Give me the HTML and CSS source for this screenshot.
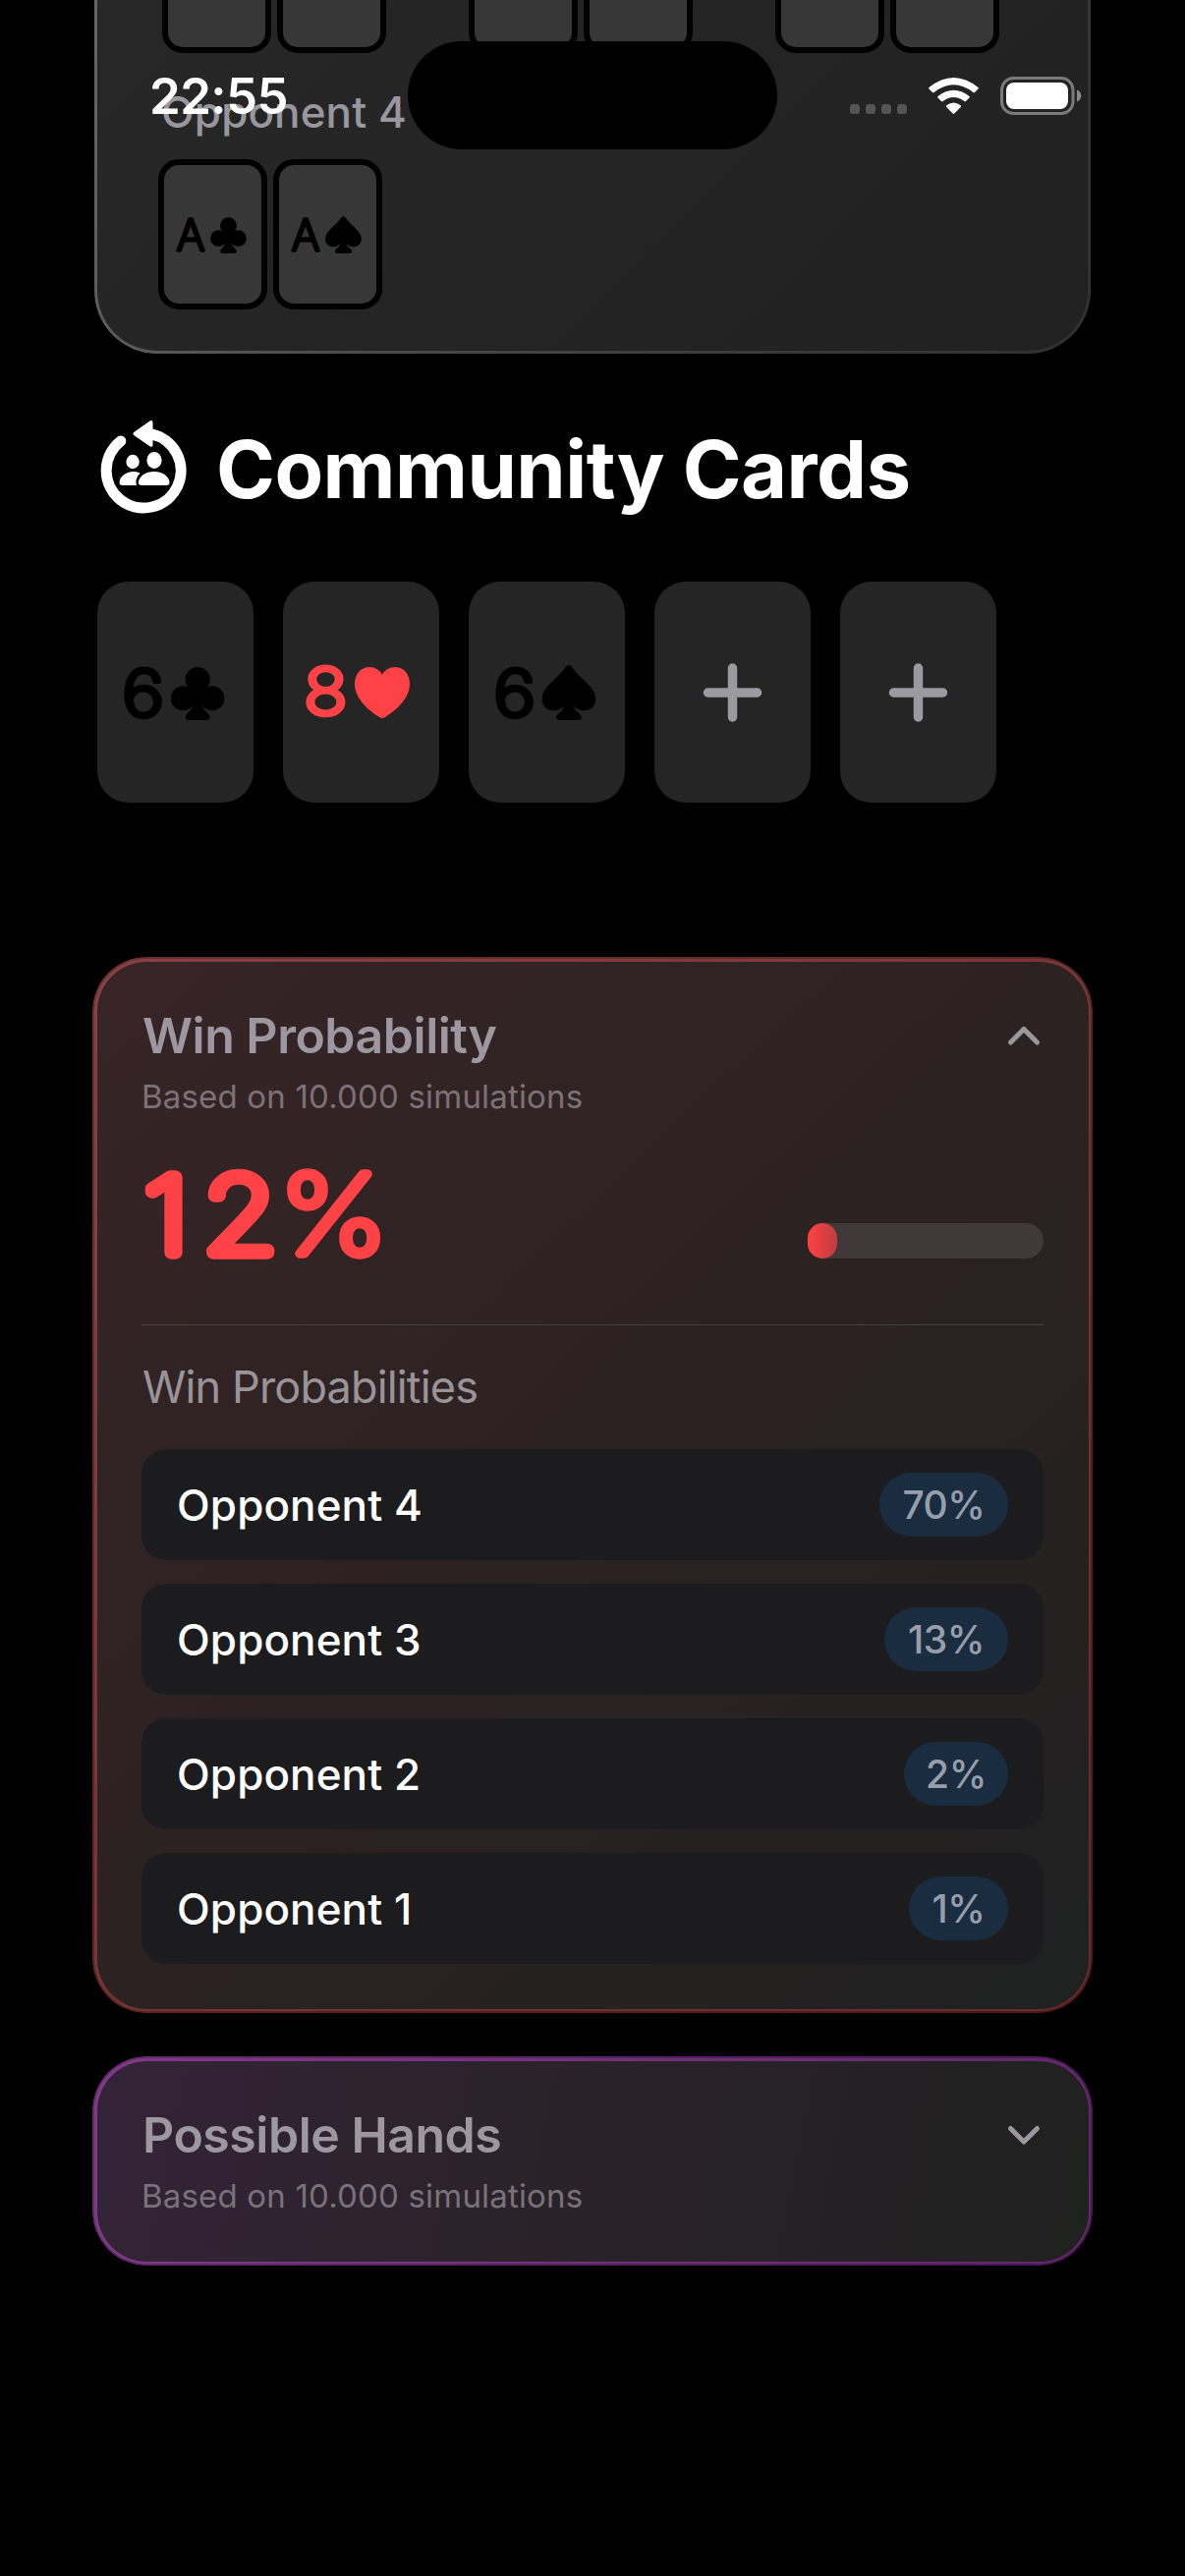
FILE: index.html
```html
<!DOCTYPE html>
<html lang="en">
<head>
<meta charset="utf-8">
<title>Poker Odds</title>
<link rel="stylesheet" href="styles.css">
</head>
<body>
<svg class="defs" aria-hidden="true">
  <symbol id="club" viewBox="0 0 55 54">
    <circle cx="27.5" cy="12.6" r="12.6"/><circle cx="12.5" cy="31.7" r="12.4"/><circle cx="42.3" cy="31.7" r="12.4"/>
    <path d="M19.500 20H35.500V36H19.500Z"/>
    <path d="M22.300 34V38C22.300 44 16.500 46.300 15.500 49.500C14.500 52 16 54 18 54H37C39 54 40.500 52 39.500 49.500C38.500 46.300 32.700 44 32.700 38V34Z"/>
  </symbol>
  <symbol id="spade" viewBox="0 0 55 56">
    <path d="M27.400 0C29.500 0 30.500 1.500 31.500 3C38 13.500 54.800 22 54.800 34.500C54.800 41.500 49.500 46.300 43 46.300C38.500 46.300 34 44 32.500 41.500C32.500 46 38 48.500 39.500 51C41 54 40 56 37 56H18C15 56 14 54 15.300 51C17 48.500 22.300 46 22.300 41.500C21 44 16.500 46.300 12 46.300C5.300 46.300 0 41.500 0 34.500C0 22 16.800 13.500 23.300 3C24.300 1.500 25.300 0 27.400 0Z"/>
  </symbol>
  <symbol id="heart" viewBox="0 0 56 52">
    <path d="M28 52c-1.500 0-2.500-.7-4-1.700C12 42.500 0 31 0 17C0 6.500 6.800 0 15 0C20.500 0 25.500 3 28 7.500C30.500 3 35.500 0 41 0C49.200 0 56 6.500 56 17C56 31 44 42.500 32 50.300C30.500 51.300 29.500 52 28 52Z"/>
  </symbol>
</svg>

<header class="status">
  <time class="clock">22:55</time>
  <div class="island"></div>
  <svg class="indicators" width="240" height="44" viewBox="864 76 240 44">
    <g fill="#545454"><rect x="865" y="106" width="10" height="10" rx="3"/><rect x="881" y="106" width="10" height="10" rx="3"/><rect x="897" y="106" width="10" height="10" rx="3"/><rect x="913" y="106" width="10" height="10" rx="3"/></g>
    <g fill="#fff">
      <path d="M945.500 89Q970.500 69 995.500 89Q996.300 89.800 995.500 90.600L992 94Q991.200 94.700 990.400 94Q970.500 78.500 950.600 94Q949.800 94.700 949 94L945.500 90.600Q944.700 89.800 945.500 89Z"/>
      <path d="M954.500 98Q970.500 85.500 986.500 98Q987.300 98.800 986.500 99.600L983 103Q982.200 103.700 981.400 103Q970.500 95 959.600 103Q958.800 103.700 958 103L954.500 99.600Q953.700 98.800 954.500 98Z"/>
      <path d="M963.300 107.200Q970.500 102 977.700 107.200Q978.500 108 977.700 108.900L971.400 115.600Q970.500 116.500 969.600 115.600L963.300 108.900Q962.500 108 963.300 107.200Z"/>
      <rect x="1024" y="84" width="63" height="27" rx="8"/>
    </g>
    <rect x="1019.500" y="79.500" width="72.500" height="36" rx="12" fill="none" stroke="#7a7a7a" stroke-width="3"/>
    <path d="M1096 91.500C1099 92.500 1100.300 95 1100.300 97.500S1099 102.500 1096 103.500Z" fill="#8a8a8a"/>
  </svg>
</header>

<main>
  <section class="opponents">
    <div class="row-top">
      <div class="hand"><div class="mini"></div><div class="mini"></div></div>
      <div class="hand"><div class="mini"></div><div class="mini"></div></div>
      <div class="hand"><div class="mini"></div><div class="mini"></div></div>
    </div>
    <div class="opp-label">Opponent 4</div>
    <div class="hand last">
      <svg class="mini" viewBox="6 6 99 141"><text class="rank-sm" x="33" y="93.300">A</text><use href="#club" x="53" y="58.500" width="37" height="38"/></svg>
      <svg class="mini" viewBox="6 6 99 141"><text class="rank-sm" x="33" y="93.300">A</text><use href="#spade" x="53" y="58" width="37" height="38"/></svg>
    </div>
  </section>

  <section class="community">
    <h1>
      <svg width="95" height="100" viewBox="98.500 428 95 100" fill="#fff">
        <path d="M122.300 449A38 38 0 1 0 153.500 441.800" fill="none" stroke="#fff" stroke-width="11" stroke-linecap="round"/>
        <path d="M135.700 440L152 428.500Q155 427 155 430.500V452.500Q155 456 152 454.200L135.700 443Q134.200 441.500 135.700 440Z"/>
        <ellipse cx="134.600" cy="470" rx="6.700" ry="7.200"/><ellipse cx="156.500" cy="468.500" rx="7.600" ry="8.500"/>
        <path d="M124 494Q121 494 121 491C121.500 484 129 480 135 480C138 480 140.500 480.600 142.300 481.800C139 484.500 137 489 138.500 494Z"/>
        <path d="M143.500 494Q140.300 494 140.300 491C141 484.500 148 480 156.300 480S171.500 484.500 172 491Q172 494 169 494Z"/>
      </svg>
      <span>Community Cards</span>
    </h1>
    <div class="board">
      <svg class="card" viewBox="0 0 159 225"><text class="rank" transform="scale(1.130 1)" x="41.300" y="136.900">6</text><use href="#club" x="74.700" y="87" width="55" height="54"/></svg>
      <svg class="card red" viewBox="0 0 159 225"><text class="rank" transform="scale(1.130 1)" x="38.400" y="135.400">8</text><use href="#heart" x="73" y="87" width="56" height="52"/></svg>
      <svg class="card" viewBox="0 0 159 225"><text class="rank" transform="scale(1.130 1)" x="41.300" y="136.900">6</text><use href="#spade" x="74.500" y="85" width="55" height="56"/></svg>
      <svg class="card" viewBox="0 0 159 225"><path class="plus" d="M54.500 113H104.500M79.500 88V138"/></svg>
      <svg class="card" viewBox="0 0 159 225"><path class="plus" d="M54.500 113H104.500M79.500 88V138"/></svg>
    </div>
  </section>

  <section class="panel win">
    <div class="head">
      <div><h2>Win Probability</h2><p class="sub">Based on 10.000 simulations</p></div>
      <svg class="chevron" width="36" height="24" viewBox="0 0 36 24"><path d="M4.500 18L18 4.500L31.500 18"/></svg>
    </div>
    <div class="score">
      <svg class="percent" width="260" height="100" viewBox="0 0 260 100"><text transform="scale(1.150 1)" y="88.200"><tspan x="22">1</tspan><tspan x="87.500">2</tspan><tspan class="pct" x="170" y="89.300">%</tspan></text></svg>
      <div class="bar"><div class="fill" style="width:12.5%"></div></div>
    </div>
    <hr>
    <h3>Win Probabilities</h3>
    <ul>
      <li><span>Opponent 4</span><b style="width:131px">70%</b></li>
      <li><span>Opponent 3</span><b style="width:126px">13%</b></li>
      <li><span>Opponent 2</span><b style="width:106px">2%</b></li>
      <li><span>Opponent 1</span><b style="width:101px">1%</b></li>
    </ul>
  </section>

  <section class="panel hands">
    <div class="head">
      <div><h2>Possible Hands</h2><p class="sub">Based on 10.000 simulations</p></div>
      <svg class="chevron" width="36" height="24" viewBox="0 0 36 24"><path d="M4.500 4.500L18 18L31.500 4.500"/></svg>
    </div>
  </section>
</main>
</body>
</html>
```
FILE: styles.css
```css
* { box-sizing: border-box; margin: 0; padding: 0; }
body {
  width: 1206px; height: 2622px; overflow: hidden;
  background: #000; color: #fff;
  font-family: Inter, "Liberation Sans", sans-serif;
  position: relative;
}
.defs { position: absolute; width: 0; height: 0; }

/* status bar floats over the scrolled content */
.status { position: absolute; inset: 0 0 auto 0; height: 160px; z-index: 2; }
.clock {
  position: absolute; left: 152px; top: 66px;
  font-size: 51px; line-height: 64px; font-weight: 600; letter-spacing: -.6px;
}
.island { position: absolute; left: 415px; top: 42px; width: 376px; height: 110px; border-radius: 55px; background: #000; }
.indicators { position: absolute; left: 864px; top: 76px; }

main { display: flex; flex-direction: column; }

.opponents {
  width: 1014px; height: 360px; margin-left: 96px;
  background: linear-gradient(135deg, #272727, #212121);
  border-radius: 0 0 64px 64px;
  position: relative;
  display: flex; flex-direction: column;
}
.opponents::after {
  content: ""; position: absolute; inset: 0; padding: 0 3px 3px;
  border-radius: inherit;
  background: linear-gradient(115deg, #666 0%, #4c4c4c 35%, #383838 75%, #303030 100%);
  mask: linear-gradient(#000 0 0) content-box exclude, linear-gradient(#000 0 0);
}
.row-top { display: flex; align-items: flex-end; gap: 84px; height: 54px; overflow: hidden; padding-left: 69px; }
.row-top .hand { width: 228px; }
.hand { display: flex; gap: 6px; }
.mini { flex: none; width: 111px; height: 153px; border: 6px solid #000; border-radius: 21px; background: #373737; }
.opp-label {
  padding-left: 68px; margin-top: 33px;
  font-size: 44px; line-height: 54px; font-weight: 500; letter-spacing: .1px; color: #98979f;
}
.last { padding-left: 65px; margin-top: 21px; }
.rank-sm { font-size: 43.500px; font-weight: 250; stroke: #000; stroke-width: 3.500px; stroke-linejoin: round; text-anchor: middle; }

.community { padding-left: 99px; margin-top: 68px; }
h1 { display: flex; align-items: center; gap: 26px; height: 100px; font-size: 81px; line-height: 100px; font-weight: 700; letter-spacing: -.5px; white-space: nowrap; }
.board { display: flex; gap: 30px; margin-top: 64px; }
.card { width: 159px; height: 225px; border-radius: 32px; background: #252526; fill: #000; stroke: #000; stroke-width: 0; }
.card.red { fill: #ff4245; stroke: #ff4245; }
.rank { font-size: 65px; font-weight: 180; stroke-width: 5px; stroke-linejoin: round; text-anchor: middle; }
.plus { stroke: #9b9aa1; stroke-width: 9.500px; stroke-linecap: round; }

.panel { position: relative; width: 1014px; margin-left: 96px; padding: 48px; border-radius: 53px; }
.panel::after {
  content: ""; position: absolute; inset: -2px; padding: 4.500px;
  border-radius: 55px;
  mask: linear-gradient(#000 0 0) content-box exclude, linear-gradient(#000 0 0);
}
.win { height: 1071px; margin-top: 159px; background: linear-gradient(136.5deg, #372426, #2c2221 50%, #1f2121); }
.win::after { background: linear-gradient(136.5deg, rgba(215,95,98,.5), rgba(215,62,62,.37)); }
.hands { height: 209px; margin-top: 48px; background: linear-gradient(101.6deg, #342337, #2a2229 48%, #1f211f); }
.hands::after { background: linear-gradient(101.6deg, rgba(200,85,215,.5), rgba(200,55,222,.38)); }

.head { display: flex; justify-content: space-between; }
h2 { font-size: 50px; line-height: 61px; font-weight: 600; letter-spacing: -.48px; color: #9c97a0; padding-left: 1px; }
.sub { margin-top: 11px; font-size: 33px; line-height: 40px; color: #7b7277; letter-spacing: .18px; }
.hands .sub { color: #79727b; }
.chevron { margin: 19px 2px 0 0; fill: none; stroke: #9b979e; stroke-width: 5px; stroke-linecap: round; stroke-linejoin: round; }
.score { display: flex; justify-content: space-between; align-items: flex-end; margin-top: 51px; height: 100px; }
.percent { fill: #ff4245; stroke: #ff4245; stroke-width: 13.500px; stroke-linejoin: round; font-size: 106.500px; font-weight: 100; overflow: visible; text-anchor: middle; }
.pct { stroke-width: 9.500px; font-size: 112px; }
.bar { width: 240px; height: 36px; border-radius: 18px; background: #403839; margin-bottom: 6px; }
.fill { height: 36px; border-radius: 15px; background: linear-gradient(90deg, #ff4245, #c03d41); }
hr { border: 0; height: 1px; background: #434043; margin-top: 61px; }
h3 { margin-top: 36px; font-size: 45px; line-height: 54px; font-weight: 400; letter-spacing: -.85px; color: #99939a; padding-left: 1px; }
ul { list-style: none; display: flex; flex-direction: column; gap: 24px; margin-top: 36px; }
li { display: flex; align-items: center; justify-content: space-between; height: 113px; padding: 0 36px; border-radius: 25px; background: #1c1c1e; font-size: 44px; font-weight: 500; letter-spacing: .1px; }
li b { height: 65px; border-radius: 32.500px; background: #1a2c3f; color: #979eab; font-size: 39px; line-height: 65px; font-weight: 500; letter-spacing: -.5px; text-align: center; }
```
